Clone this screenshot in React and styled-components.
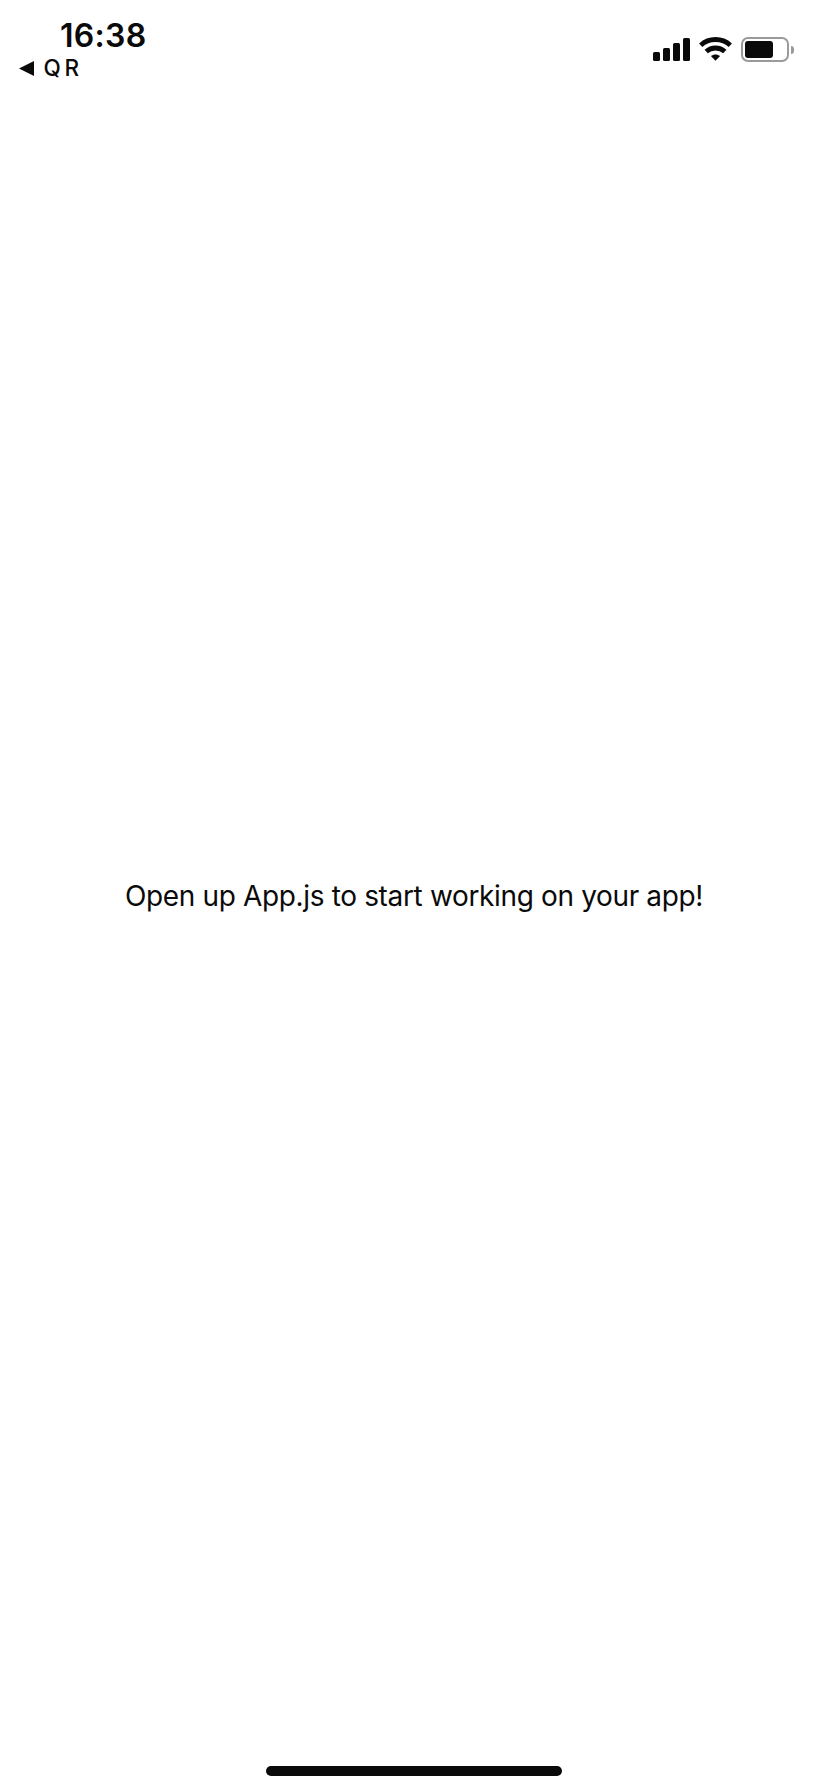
import React from 'react';
import styled, { createGlobalStyle } from 'styled-components';

const INK = '#0a0a0a';

const GlobalStyle = createGlobalStyle`
  body {
    margin: 0;
    background: #fff;
  }
`;

const Screen = styled.div`
  display: flex;
  flex-direction: column;
  width: 100%;
  height: 100vh;
  overflow: hidden;
  background: #fff;
  color: ${INK};
  font-family: Inter, 'Liberation Sans', sans-serif;
`;

const StatusBar = styled.header`
  display: flex;
  justify-content: space-between;
  flex: none;
  height: 88px;
  box-sizing: border-box;
  padding: 18px 34px 0 19px;
`;

const ClockColumn = styled.div`
  display: flex;
  flex-direction: column;
`;

const Clock = styled.time`
  margin-left: 41px;
  padding-top: 1px;
  font-size: 32px;
  line-height: 34px;
  font-weight: 600;
  letter-spacing: 0.3px;
  white-space: nowrap;
`;

const BackLink = styled.div`
  display: flex;
  align-items: center;
  gap: 9.5px;
  height: 30px;
  font-size: 22.5px;
  line-height: 30px;
  font-weight: 500;
  letter-spacing: 3.6px;
`;

const Indicators = styled.div`
  display: flex;
  align-items: flex-start;
  padding-top: 19px;
`;

const Bars = styled.div`
  display: flex;
  align-items: flex-end;
  gap: 3px;
  height: 24px;
  margin-right: 9px;
`;

const Bar = styled.span`
  width: 7px;
  height: ${({ $height }) => $height}px;
  border-radius: 1.5px;
  background: ${INK};
`;

const WifiIcon = styled.svg`
  display: block;
  margin-right: 9px;
`;

const Battery = styled.div`
  display: flex;
  align-items: center;
  gap: 2px;
`;

const BatteryCase = styled.div`
  box-sizing: border-box;
  width: 48px;
  height: 25px;
  padding: 2px;
  border: 2px solid #9a9a9a;
  border-radius: 7px;
`;

const BatteryCharge = styled.div`
  width: 28px;
  height: 17px;
  border-radius: 3px;
  background: ${INK};
`;

const BatteryTip = styled.div`
  width: 3px;
  height: 8px;
  border-radius: 0 3px 3px 0;
  background: #9a9a9a;
`;

const Main = styled.main`
  display: flex;
  flex: 1;
  align-items: center;
  justify-content: center;
  padding-bottom: 63px;
`;

const Message = styled.p`
  margin: 0;
  font-size: 28px;
  line-height: 34px;
  letter-spacing: -0.35px;
  white-space: nowrap;
`;

const HomeArea = styled.footer`
  display: flex;
  flex: none;
  justify-content: center;
  height: 26px;
`;

const HomeIndicator = styled.div`
  width: 296px;
  height: 10px;
  border-radius: 5px;
  background: ${INK};
`;

export default function App() {
  return (
    <Screen>
      <GlobalStyle />
      <StatusBar>
        <ClockColumn>
          <Clock>16:38</Clock>
          <BackLink>
            <svg width="15" height="15" viewBox="0 0 15 15" fill={INK}>
              <path d="M0 7.5 L15 0 V15 Z" />
            </svg>
            QR
          </BackLink>
        </ClockColumn>
        <Indicators>
          <Bars>
            {[9, 13, 18, 23].map((height) => (
              <Bar key={height} $height={height} />
            ))}
          </Bars>
          <WifiIcon width="33" height="24" viewBox="0 0 33 24" fill="none">
            <path d="M1.7 8.2 C10 0.6 23 0.6 31.3 8.2" stroke={INK} strokeWidth="4.8" />
            <path d="M7.2 14.6 C12.4 9.8 20.6 9.8 25.8 14.6" stroke={INK} strokeWidth="4.8" />
            <path d="M11.9 19.1 C14.5 16.8 18.5 16.8 21.1 19.1 L16.5 23.8 Z" fill={INK} />
          </WifiIcon>
          <Battery>
            <BatteryCase>
              <BatteryCharge />
            </BatteryCase>
            <BatteryTip />
          </Battery>
        </Indicators>
      </StatusBar>
      <Main>
        <Message>Open up App.js to start working on your app!</Message>
      </Main>
      <HomeArea>
        <HomeIndicator />
      </HomeArea>
    </Screen>
  );
}
